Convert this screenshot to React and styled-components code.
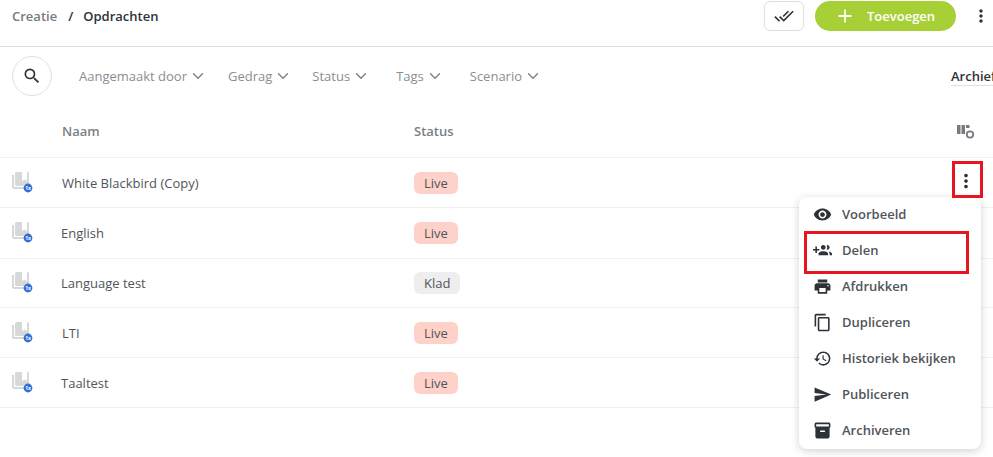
import React from 'react';
import styled, { createGlobalStyle } from 'styled-components';
import { ChevronDown } from 'lucide-react';
import {
  MdVisibility,
  MdPrint,
  MdContentCopy,
  MdRestore,
  MdSend,
  MdInventory2,
  MdSearch,
  MdMoreVert,
  MdDoneAll,
  MdAdd,
} from 'react-icons/md';

const GlobalStyle = createGlobalStyle`
  html, body {
    margin: 0;
    padding: 0;
    background: #fff;
    overflow: hidden;
  }
  body {
    font-family: "Open Sans", "Liberation Sans", sans-serif;
    color: #3c4043;
  }
`;

const Page = styled.div`
  position: relative;
  width: 993px;
  height: 457px;
  overflow: hidden;
`;

const Header = styled.header`
  display: flex;
  align-items: flex-start;
  justify-content: space-between;
  height: 47px;
  padding: 1px 2px 0 12px;
  box-sizing: border-box;
  border-bottom: 1px solid #dfdfdf;
`;

const Crumbs = styled.div`
  display: flex;
  align-items: center;
  height: 30px;
  font-size: 13px;
  font-weight: 600;
  span:nth-child(1) {
    color: #777b80;
  }
  span:nth-child(2) {
    color: #2d3238;
    margin: 0 10px 0 11px;
  }
  span:nth-child(3) {
    color: #2d3238;
  }
`;

const HeaderActions = styled.div`
  display: flex;
  align-items: center;
`;

const CheckButton = styled.div`
  display: flex;
  align-items: center;
  justify-content: center;
  width: 40px;
  height: 30px;
  box-sizing: border-box;
  border: 1px solid #e0e0e0;
  border-radius: 6px;
  color: #2d3238;
  font-size: 20px;
  margin-right: 11px;
`;

const AddButton = styled.div`
  display: flex;
  align-items: center;
  width: 141px;
  height: 30px;
  box-sizing: border-box;
  padding-left: 19px;
  border-radius: 15px;
  background: #a7d037;
  color: #fff;
  font-size: 13px;
  font-weight: 600;
  svg {
    font-size: 22px;
    margin-right: 11px;
  }
`;

const HeaderMore = styled.div`
  display: flex;
  margin-left: 15px;
  font-size: 20px;
  color: #2d3238;
`;

const FilterBar = styled.div`
  display: flex;
  align-items: center;
  height: 58px;
  padding: 0 0 0 12px;
`;

const SearchCircle = styled.div`
  display: flex;
  align-items: center;
  justify-content: center;
  flex: none;
  width: 40px;
  height: 40px;
  box-sizing: border-box;
  border: 1px solid #e0e0e0;
  border-radius: 50%;
  font-size: 20px;
  color: #2d3238;
  margin-right: 27px;
`;

const Filter = styled.div`
  display: flex;
  align-items: center;
  margin-right: ${(p) => p.$gap}px;
  font-size: 13px;
  color: #8a8e92;
  white-space: nowrap;
  svg {
    margin-left: 2px;
    color: #777b80;
  }
`;

const ArchiveTab = styled.div`
  position: absolute;
  left: 951px;
  top: 67px;
  width: 60px;
  height: 18px;
  font-size: 13px;
  font-weight: 600;
  color: #2d3238;
  border-bottom: 1px solid #dfdfdf;
`;

const Table = styled.div`
  display: flex;
  flex-direction: column;
`;

const HeadRow = styled.div`
  display: grid;
  grid-template-columns: 352px 1fr 38px;
  align-items: center;
  height: 53px;
  padding-left: 62px;
  box-sizing: border-box;
  border-bottom: 1px solid #f0f0f0;
  font-size: 13px;
  font-weight: 600;
  color: #7c8085;
`;

const Row = styled.div`
  display: grid;
  grid-template-columns: 62px 352px 1fr;
  align-items: center;
  height: ${(p) => p.$height}px;
  box-sizing: border-box;
  border-bottom: 1px solid #f0f0f0;
  font-size: 13px;
  color: #50555a;
`;

const RowIcon = styled.div`
  padding-left: 12px;
  display: flex;
`;

const RowName = styled.div`
  margin-left: ${(p) => p.$shift}px;
`;

const Badge = styled.span`
  display: inline-block;
  padding: 0 10px;
  height: 22px;
  line-height: 22px;
  border-radius: 6px;
  background: ${(p) => (p.$draft ? '#eeeeee' : '#ffd2c9')};
  color: #50555a;
`;

const ColumnsIcon = styled.svg`
  display: block;
  margin-left: 2px;
`;

const RowMore = styled.div`
  position: absolute;
  left: 955px;
  top: 170px;
  display: flex;
  font-size: 22px;
  color: #2d3238;
`;

const Marker = styled.div`
  position: absolute;
  left: ${(p) => p.$x}px;
  top: ${(p) => p.$y}px;
  width: ${(p) => p.$w}px;
  height: ${(p) => p.$h}px;
  box-sizing: border-box;
  border: 3px solid #e8141f;
  z-index: 3;
`;

const Menu = styled.div`
  position: absolute;
  left: 799px;
  top: 197px;
  width: 182px;
  height: 252px;
  background: #fff;
  border-radius: 8px;
  box-shadow: 0 2px 8px rgba(0, 0, 0, 0.18);
  z-index: 2;
`;

const MenuItem = styled.div`
  display: flex;
  align-items: center;
  height: 36px;
  box-sizing: border-box;
  padding: 0 0 2px 15px;
  font-size: 13px;
  font-weight: 600;
  color: #50555a;
  white-space: nowrap;
  svg {
    flex: none;
    font-size: 19px;
    color: #2d3238;
    margin-right: 10px;
    margin-left: -1px;
  }
`;

function BookIcon() {
  return (
    <svg width="22" height="22" viewBox="0 0 22 22">
      <path d="M0 3h2v12h12v2H2a2 2 0 0 1-2-2z" fill="#d8d8d8" />
      <rect x="3" y="0" width="14" height="14" rx="1.5" fill="#d8d8d8" />
      <path d="M10 0h5v9l-2.5-1.6L10 9z" fill="#fff" />
      <circle cx="16" cy="16" r="4.4" fill="#2f6fd8" />
      <text x="16" y="17.8" textAnchor="middle" fontSize="5" fontWeight="700" fill="#fff">
        1x
      </text>
    </svg>
  );
}

function ShareIcon() {
  return (
    <svg width="1em" height="1em" viewBox="0 0 24 24" fill="currentColor">
      <path d="M8 10H5V7H3v3H0v2h3v3h2v-3h3v-2zm10 1c1.66 0 2.99-1.34 2.99-3S19.66 5 18 5c-.32 0-.63.05-.91.14.57.81.9 1.79.9 2.86s-.34 2.04-.9 2.86c.28.09.59.14.91.14zm-5 0c1.66 0 2.99-1.34 2.99-3S14.66 5 13 5s-3 1.34-3 3 1.34 3 3 3zm6.62 2.16c.83.73 1.38 1.66 1.38 2.84v2h3v-2c0-1.54-2.37-2.49-4.38-2.84zM13 13c-2 0-6 1-6 3v2h12v-2c0-2-4-3-6-3z" />
    </svg>
  );
}

const filters = [
  { label: 'Aangemaakt door', gap: 21 },
  { label: 'Gedrag', gap: 20 },
  { label: 'Status', gap: 26 },
  { label: 'Tags', gap: 26 },
  { label: 'Scenario', gap: 0 },
];

const rows = [
  { name: 'White Blackbird (Copy)', status: 'Live', height: 50, shift: 0 },
  { name: 'English', status: 'Live', height: 51, shift: -1 },
  { name: 'Language test', status: 'Klad', height: 49, shift: -1 },
  { name: 'LTI', status: 'Live', height: 50, shift: 0 },
  { name: 'Taaltest', status: 'Live', height: 50, shift: -1 },
];

const menuItems = [
  { label: 'Voorbeeld', Icon: MdVisibility },
  { label: 'Delen', Icon: ShareIcon },
  { label: 'Afdrukken', Icon: MdPrint },
  { label: 'Dupliceren', Icon: MdContentCopy },
  { label: 'Historiek bekijken', Icon: MdRestore },
  { label: 'Publiceren', Icon: MdSend },
  { label: 'Archiveren', Icon: MdInventory2 },
];

export default function App() {
  return (
    <Page>
      <GlobalStyle />
      <Header>
        <Crumbs>
          <span>Creatie</span>
          <span>/</span>
          <span>Opdrachten</span>
        </Crumbs>
        <HeaderActions>
          <CheckButton>
            <MdDoneAll />
          </CheckButton>
          <AddButton>
            <MdAdd />
            Toevoegen
          </AddButton>
          <HeaderMore>
            <MdMoreVert />
          </HeaderMore>
        </HeaderActions>
      </Header>
      <FilterBar>
        <SearchCircle>
          <MdSearch />
        </SearchCircle>
        {filters.map((f) => (
          <Filter key={f.label} $gap={f.gap}>
            {f.label}
            <ChevronDown size={18} strokeWidth={1.6} />
          </Filter>
        ))}
      </FilterBar>
      <ArchiveTab>Archief</ArchiveTab>
      <Table>
        <HeadRow>
          <span>Naam</span>
          <span>Status</span>
          <ColumnsIcon width="18" height="16" viewBox="0 0 18 16">
            <path d="M0 2h3.5v9H0zM4.5 2H8v9H4.5zM9 2h3.5v3H9z" fill="#777b80" />
            <circle cx="13" cy="11.5" r="3.2" fill="none" stroke="#777b80" strokeWidth="1.8" />
          </ColumnsIcon>
        </HeadRow>
        {rows.map((r) => (
          <Row key={r.name} $height={r.height}>
            <RowIcon>
              <BookIcon />
            </RowIcon>
            <RowName $shift={r.shift}>{r.name}</RowName>
            <div>
              <Badge $draft={r.status === 'Klad'}>{r.status}</Badge>
            </div>
          </Row>
        ))}
      </Table>
      <RowMore>
        <MdMoreVert />
      </RowMore>
      <Marker $x={952} $y={161} $w={31} $h={37} />
      <Menu>
        {menuItems.map(({ label, Icon }) => (
          <MenuItem key={label}>
            <Icon />
            {label}
          </MenuItem>
        ))}
      </Menu>
      <Marker $x={804} $y={231} $w={165} $h={43} />
    </Page>
  );
}
